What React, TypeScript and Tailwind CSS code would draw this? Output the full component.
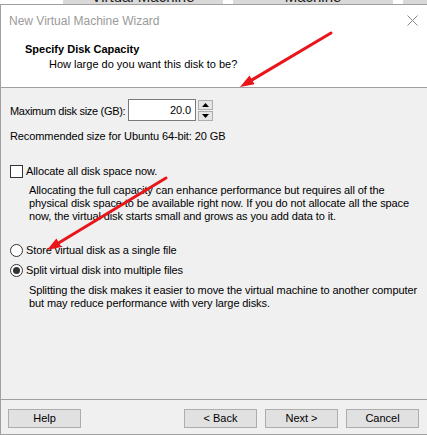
import React from 'react';

const font = { fontFamily: '"Liberation Sans", Arial, sans-serif' };

const WinButton = ({ label }: { label: string }) => (
  <button className="w-[73px] h-[19px] bg-[#e1e1e1] border border-[#adadad] text-[11px] leading-[11px] text-black">
    {label}
  </button>
);

const Arrow = ({ x1, y1, x2, y2 }: { x1: number; y1: number; x2: number; y2: number }) => {
  const dx = x2 - x1;
  const dy = y2 - y1;
  const len = Math.hypot(dx, dy);
  const ux = dx / len;
  const uy = dy / len;
  const bx = x2 - ux * 14;
  const by = y2 - uy * 14;
  const nx = -uy * 5;
  const ny = ux * 5;
  return (
    <g>
      <line x1={x1} y1={y1} x2={bx} y2={by} stroke="#e8161a" strokeWidth={3} strokeLinecap="round" />
      <polygon points={`${x2},${y2} ${bx + nx},${by + ny} ${bx - nx},${by - ny}`} fill="#e8161a" />
    </g>
  );
};

export default function App() {
  return (
    <div className="relative w-[427px] h-[435px] overflow-hidden bg-white" style={font}>
      {/* window behind, tabs peeking out */}
      <div className="h-[4px] flex overflow-hidden">
        <div className="w-[63px]" />
        <div className="w-[160px] bg-[#d9d9d9] flex justify-center">
          <span className="text-[15px] leading-[15px] -mt-[11px] text-[#222]">Virtual Machine</span>
        </div>
        <div className="w-[10px]" />
        <div className="w-[160px] bg-[#d9d9d9] flex justify-center">
          <span className="text-[15px] leading-[15px] -mt-[11px] text-[#222]">Machine</span>
        </div>
        <div className="w-[10px]" />
        <div className="flex-1 bg-[#d9d9d9]" />
      </div>

      <div className="h-[431px] flex flex-col border-t border-l border-b border-[#a0a0a0]">
        {/* title bar */}
        <div className="h-[31px] flex items-center justify-between pl-[8px] pr-[9px] bg-white">
          <span className="text-[12px] text-[#9a9a9a]">New Virtual Machine Wizard</span>
          <svg width="11" height="11" viewBox="0 0 11 11">
            <path d="M0.5 0.5 L10.5 10.5 M10.5 0.5 L0.5 10.5" stroke="#8a8a8a" strokeWidth="1" />
          </svg>
        </div>

        {/* header */}
        <div className="h-[52px] bg-white border-b border-[#a0a0a0] pt-[7px] text-[11px] leading-[13px] text-black">
          <div className="pl-[24px] font-bold">Specify Disk Capacity</div>
          <div className="pl-[48px] mt-[2px]">How large do you want this disk to be?</div>
        </div>

        {/* body */}
        <div className="flex-1 bg-[#f0f0f0] pl-[9px] pt-[11px] text-[11px] leading-[13px] tracking-[-0.1px] text-black">
          <div className="flex items-center h-[22px]">
            <span className="w-[118px] shrink-0 pt-[2px] tracking-[-0.3px] whitespace-nowrap">Maximum disk size (GB):</span>
            <div className="w-[68px] h-[22px] bg-white border border-[#7a7a7a] flex items-center justify-end pr-[4px]">
              20.0
            </div>
            <div className="ml-[2px] flex flex-col gap-[1px]">
              <div className="w-[15px] h-[10px] bg-[#e5e5e5] border border-[#adadad] flex items-center justify-center">
                <svg width="7" height="4" viewBox="0 0 7 4"><path d="M3.5 0 L7 4 L0 4 Z" fill="#000" /></svg>
              </div>
              <div className="w-[15px] h-[10px] bg-[#e5e5e5] border border-[#adadad] flex items-center justify-center">
                <svg width="7" height="4" viewBox="0 0 7 4"><path d="M0 0 L7 0 L3.5 4 Z" fill="#000" /></svg>
              </div>
            </div>
          </div>

          <div className="mt-[9px]">Recommended size for Ubuntu 64-bit: 20 GB</div>

          <div className="mt-[22px] flex items-center h-[13px]">
            <span className="w-[13px] h-[13px] bg-white border border-[#333]" />
            <span className="ml-[3px]">Allocate all disk space now.</span>
          </div>
          <div className="mt-[6px] pl-[19px] w-[414px]">
            Allocating the full capacity can enhance performance but requires all of the physical disk space to be available right now. If you do not allocate all the space now, the virtual disk starts small and grows as you add data to it.
          </div>

          <div className="mt-[21px] flex items-center h-[13px]">
            <span className="w-[13px] h-[13px] rounded-full bg-white border border-[#333]" />
            <span className="ml-[3px]">Store virtual disk as a single file</span>
          </div>
          <div className="mt-[7px] flex items-center h-[13px]">
            <span className="w-[13px] h-[13px] rounded-full bg-white border border-[#333] flex items-center justify-center">
              <span className="w-[7px] h-[7px] rounded-full bg-[#333]" />
            </span>
            <span className="ml-[3px]">Split virtual disk into multiple files</span>
          </div>
          <div className="mt-[7px] pl-[19px] w-[418px]">
            Splitting the disk makes it easier to move the virtual machine to another computer but may reduce performance with very large disks.
          </div>
        </div>

        {/* footer */}
        <div className="border-t border-[#a0a0a0] bg-[#f0f0f0] pt-[9px] pb-[6px] pl-[7px] pr-[8px] flex justify-between">
          <WinButton label="Help" />
          <div className="flex gap-[8px]">
            <WinButton label="< Back" />
            <WinButton label="Next >" />
            <WinButton label="Cancel" />
          </div>
        </div>
      </div>

      {/* red annotation arrows */}
      <svg className="absolute inset-0 pointer-events-none" width="427" height="435">
        <Arrow x1={331} y1={33} x2={240} y2={87} />
        <Arrow x1={166} y1={178} x2={47} y2={250} />
      </svg>
    </div>
  );
}
